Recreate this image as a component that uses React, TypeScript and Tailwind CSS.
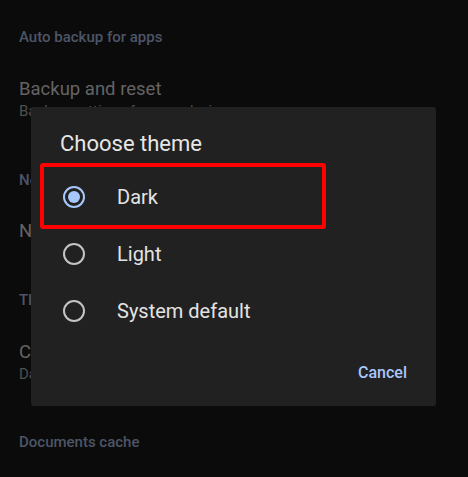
import React from "react";

const font = { fontFamily: "Roboto, 'Noto Sans', sans-serif" };

function Radio({ selected }: { selected?: boolean }) {
  return (
    <svg width="24" height="24" viewBox="0 0 24 24" className="shrink-0">
      <circle
        cx="12"
        cy="12"
        r="10"
        fill="none"
        stroke={selected ? "#a8c7fa" : "#c4c4c4"}
        strokeWidth="2"
      />
      {selected && <circle cx="12" cy="12" r="6" fill="#a8c7fa" />}
    </svg>
  );
}

export default function App() {
  const options = [
    { label: "Dark", selected: true },
    { label: "Light" },
    { label: "System default" },
  ];
  return (
    <div
      className="relative w-[468px] h-[477px] overflow-hidden bg-[#0b0b0b]"
      style={font}
    >
      {/* background settings list */}
      <div className="flex flex-col px-[19px] pt-[27px]">
        <div className="text-[15px] leading-[20px] font-medium text-[#4d5566]">
          Auto backup for apps
        </div>
        <div className="mt-[30px] text-[18.5px] leading-[24px] text-[#646464]">
          Backup and reset
        </div>
        <div className="text-[15px] leading-[20px] text-[#4f4f4f]">
          Backup settings for your device
        </div>
        <div className="mt-[49px] text-[15px] leading-[20px] font-medium text-[#4d5566]">
          Notifications
        </div>
        <div className="mt-[29px] text-[18.5px] leading-[24px] text-[#646464]">
          Notification settings
        </div>
        <div className="mt-[47px] text-[15px] leading-[20px] font-medium text-[#4d5566]">
          Theme
        </div>
        <div className="mt-[30px] text-[18.5px] leading-[24px] text-[#646464]">
          Choose theme
        </div>
        <div className="text-[15px] leading-[20px] text-[#4f4f4f]">Dark</div>
        <div className="mt-[48px] text-[15px] leading-[20px] font-medium text-[#4d5566]">
          Documents cache
        </div>
      </div>

      {/* dialog */}
      <div className="absolute left-[31px] top-[107px] w-[405px] h-[299px] rounded-[3px] bg-[#212121] flex flex-col">
        <div className="pt-[23px] pl-[29px] text-[22px] leading-[28px] text-[#e6e6e6]">
          Choose theme
        </div>
        <div className="mt-[10px] flex flex-col">
          {options.map((o) => (
            <div
              key={o.label}
              className="h-[57px] flex items-center pl-[31px] gap-[31px]"
            >
              <Radio selected={o.selected} />
              <span className="text-[20px] leading-[24px] text-[#e3e3e3]">
                {o.label}
              </span>
            </div>
          ))}
        </div>
        <div className="mt-[24px] flex justify-end pr-[29px]">
          <span className="text-[16px] leading-[20px] font-medium text-[#a8c7fa]">
            Cancel
          </span>
        </div>

        {/* highlight */}
        <div className="absolute left-[9px] top-[56px] w-[286px] h-[66px] border-[4px] border-[#ff0000] rounded-[3px]" />
      </div>
    </div>
  );
}
